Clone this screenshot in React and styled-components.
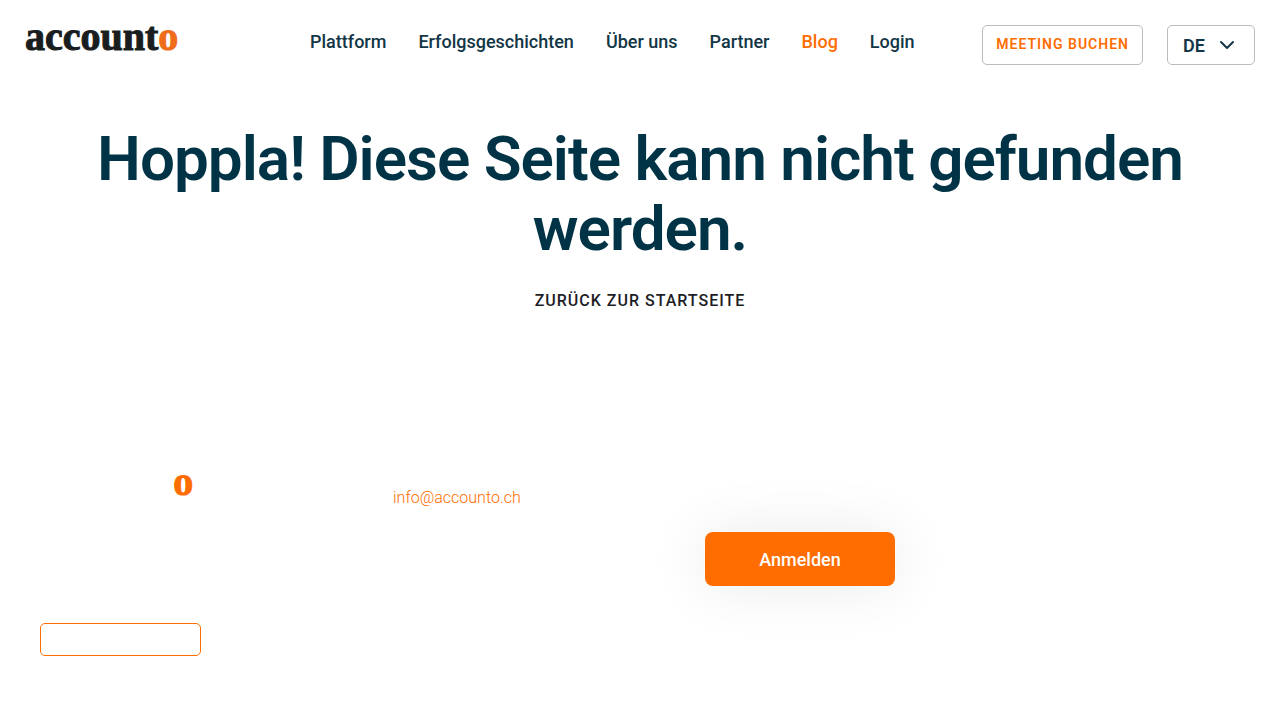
import React, { useState } from 'react'
import styled, { createGlobalStyle } from 'styled-components'

const GlobalStyle = createGlobalStyle`
    * {
        box-sizing: border-box;
    }

    body {
        margin: 0;
        background: #ffffff;
        color: #003345;
        font-family: Roboto, "Liberation Sans", sans-serif;
    }
`;

const Header = styled.header`
    display: flex;
    align-items: flex-start;
    justify-content: space-between;
    padding: 25px;
`;

const LogoLink = styled.a`
    display: block;
    font-family: "Liberation Serif", serif;
    font-weight: 700;
    font-size: 40px;
    line-height: 24px;
    color: ${props => props.$light ? '#ffffff' : '#191d20'};
    -webkit-text-stroke: 1px currentColor;
    text-decoration: none;

    span {
        color: ${props => props.$light ? '#ff6d00' : '#ef6c1a'};
    }
`;

const Nav = styled.nav`
    display: flex;
    gap: 32px;
    margin-left: 64px;
`;

const NavLink = styled.a`
    font-weight: 500;
    font-size: 18px;
    line-height: 34px;
    color: ${props => props.$active ? '#ff6d00' : '#123646'};
    text-decoration: none;
    white-space: nowrap;
`;

const Actions = styled.div`
    display: flex;
    gap: 24px;
`;

const MeetingLink = styled.a`
    height: 40px;
    padding: 0 13px;
    border: 1px solid #babac0;
    border-radius: 5px;
    font-weight: 600;
    font-size: 14px;
    line-height: 36px;
    letter-spacing: 1px;
    text-transform: uppercase;
    text-decoration: none;
    white-space: nowrap;
    color: #ff6d00;
`;

const Language = styled.label`
    display: grid;
    align-items: center;
    width: 88px;
    height: 40px;

    select, svg {
        grid-area: 1 / 1;
    }

    svg {
        justify-self: end;
        margin-right: 20px;
        pointer-events: none;
    }
`;

const LanguageSelect = styled.select`
    appearance: none;
    width: 100%;
    height: 40px;
    padding: 0 15px;
    border: 1px solid #babac0;
    border-radius: 5px;
    background: transparent;
    font-family: inherit;
    font-weight: 600;
    font-size: 18px;
    color: #123646;
`;

const Main = styled.main`
    padding: 34px 40px 0;
    text-align: center;
`;

const Title = styled.h1`
    margin: 0;
    font-weight: 600;
    font-size: 62px;
    line-height: 70px;
    letter-spacing: -1px;
`;

const BackLink = styled.a`
    display: inline-block;
    margin-top: 25px;
    font-weight: 500;
    font-size: 16px;
    line-height: 24px;
    letter-spacing: 1px;
    text-transform: uppercase;
    text-decoration: none;
    color: #1d1d25;
`;

const Footer = styled.footer`
    display: grid;
    grid-template-columns: 353fr 312fr 535fr;
    align-items: start;
    padding: 157px 40px 64px;
`;

const Brand = styled.div`
    display: flex;
    flex-direction: column;
    align-items: flex-start;
    gap: 129px;
`;

const OutlineButton = styled.button`
    width: 161px;
    height: 33px;
    border: 1px solid #ff6d00;
    border-radius: 5px;
    background: #ffffff;
`;

const MailLink = styled.a`
    padding-top: 16px;
    font-weight: 300;
    font-size: 16px;
    line-height: 24px;
    color: #ff6d00;
    text-decoration: none;
`;

const SubmitButton = styled.button`
    justify-self: start;
    width: 190px;
    height: 54px;
    margin-top: 62px;
    border: 0;
    border-radius: 8px;
    background: #ff6d00;
    box-shadow: 0 0 60px rgba(0, 0, 0, 0.09);
    font-family: inherit;
    font-weight: 500;
    font-size: 18px;
    color: #ffffff;
`;

const links = ['Plattform', 'Erfolgsgeschichten', 'Über uns', 'Partner', 'Blog', 'Login'];

function Logo({ light }) {
    return (
        <LogoLink href="#" $light={light}>account<span>o</span></LogoLink>
    )
}

export default function App() {
    const [language, setLanguage] = useState('DE');

    return (
        <>
            <GlobalStyle />
            <Header>
                <Logo />
                <Nav>
                    {links.map(link => (
                        <NavLink key={link} href="#" $active={link === 'Blog'}>{link}</NavLink>
                    ))}
                </Nav>
                <Actions>
                    <MeetingLink href="#">Meeting buchen</MeetingLink>
                    <Language>
                        <LanguageSelect
                            aria-label="Sprache"
                            value={language}
                            onChange={e => setLanguage(e.target.value)}
                        >
                            <option>DE</option>
                        </LanguageSelect>
                        <svg width="16" height="10" viewBox="0 0 16 10" fill="none" stroke="#123646" strokeWidth="2" strokeLinecap="round" strokeLinejoin="round">
                            <path d="M2 2l6 6 6-6" />
                        </svg>
                    </Language>
                </Actions>
            </Header>
            <Main>
                <Title>Hoppla! Diese Seite kann nicht gefunden werden.</Title>
                <BackLink href="#">Zurück zur Startseite</BackLink>
            </Main>
            <Footer>
                <Brand>
                    <Logo light />
                    <OutlineButton type="button" aria-label="Meeting buchen" />
                </Brand>
                <MailLink href="mailto:info@accounto.ch">info@accounto.ch</MailLink>
                <SubmitButton type="button">Anmelden</SubmitButton>
            </Footer>
        </>
    )
}
